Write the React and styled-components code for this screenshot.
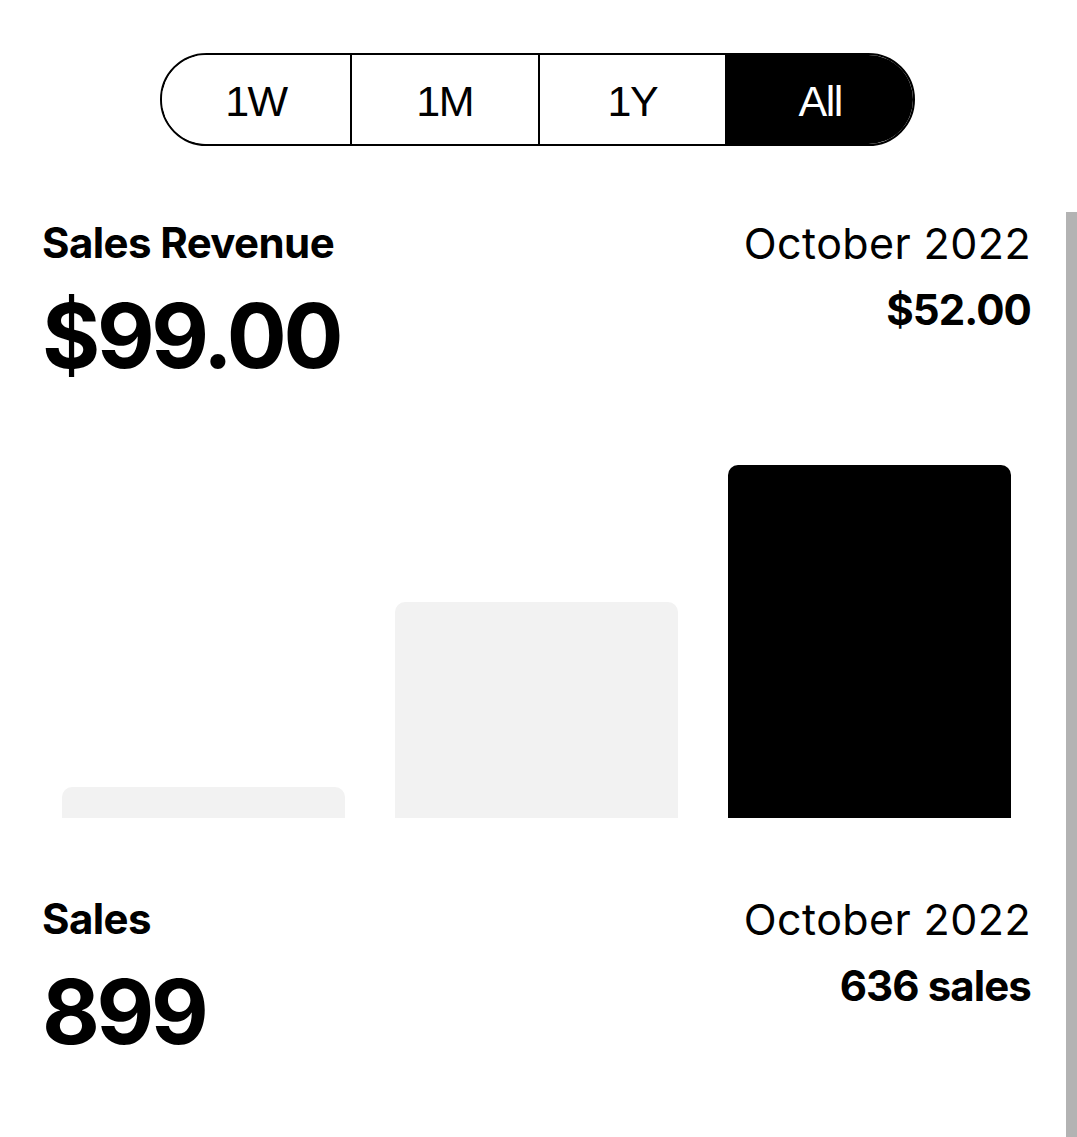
import React, { useState } from "react";
import styled, { createGlobalStyle } from "styled-components";

const GlobalStyle = createGlobalStyle`
  html, body {
    margin: 0;
    padding: 0;
    background: #ffffff;
  }
  body {
    font-family: Inter, "Noto Sans", sans-serif;
    color: #000000;
  }
`;

const Page = styled.div`
  position: relative;
  min-height: 1137px;
  padding: 53px 46px 0 42px;
  box-sizing: border-box;
  overflow: hidden;
`;

const RangeRow = styled.div`
  display: flex;
  justify-content: center;
  padding-left: 2px;
`;

const Segmented = styled.div`
  display: grid;
  grid-template-columns: repeat(4, 1fr);
  width: 755px;
  height: 93px;
  border: 2px solid #000;
  border-radius: 47px;
  box-sizing: border-box;
  overflow: hidden;
`;

const Segment = styled.button`
  display: flex;
  align-items: center;
  justify-content: center;
  margin: 0;
  padding: 3px 0 0 0;
  border: none;
  border-left: ${(p) => (p.$first ? "none" : "2px solid #000")};
  background: ${(p) => (p.$active ? "#000" : "#fff")};
  color: ${(p) => (p.$active ? "#fff" : "#000")};
  font-family: "Liberation Sans", Arial, sans-serif;
  font-size: 43px;
  letter-spacing: -1.5px;
  cursor: pointer;
`;

const StatBlock = styled.section`
  display: flex;
  justify-content: space-between;
  align-items: flex-start;
  margin-top: ${(p) => p.$top}px;
`;

const Column = styled.div`
  display: flex;
  flex-direction: column;
  align-items: ${(p) => (p.$right ? "flex-end" : "flex-start")};
  gap: ${(p) => p.$gap}px;
`;

const Label = styled.div`
  font-size: 42px;
  line-height: 1;
  font-weight: 650;
  letter-spacing: -0.6px;
`;

const Period = styled.div`
  font-size: 43px;
  line-height: 1;
  font-weight: 400;
  letter-spacing: 0.4px;
`;

const BigValue = styled.div`
  font-size: 89px;
  line-height: 1;
  font-weight: 650;
  letter-spacing: -3.4px;
`;

const SmallValue = styled.div`
  font-size: 42px;
  line-height: 1;
  font-weight: 650;
  letter-spacing: -0.9px;
`;

const Chart = styled.div`
  display: grid;
  grid-template-columns: repeat(3, 1fr);
  column-gap: 50px;
  align-items: end;
  height: 353px;
  margin-top: 85px;
  padding: 0 20px;
`;

const Bar = styled.div`
  background: ${(p) => (p.$active ? "#000" : "#f2f2f2")};
  border-radius: 10px 10px 0 0;
`;

const ScrollThumb = styled.div`
  position: absolute;
  top: 212px;
  right: 0;
  bottom: 0;
  width: 11px;
  background: #b3b3b3;
`;

const ranges = ["1W", "1M", "1Y", "All"];
const bars = [
  { month: "August 2022", value: 4.6 },
  { month: "September 2022", value: 31.8 },
  { month: "October 2022", value: 52 },
];

export default function App() {
  const [range, setRange] = useState("All");
  const max = Math.max(...bars.map((b) => b.value));

  return (
    <>
      <GlobalStyle />
      <Page>
        <RangeRow>
          <Segmented>
            {ranges.map((r, i) => (
              <Segment
                key={r}
                $first={i === 0}
                $active={r === range}
                onClick={() => setRange(r)}
              >
                {r}
              </Segment>
            ))}
          </Segmented>
        </RangeRow>

        <StatBlock $top={76}>
          <Column $gap={27}>
            <Label>Sales Revenue</Label>
            <BigValue>$99.00</BigValue>
          </Column>
          <Column $right $gap={24}>
            <Period>October 2022</Period>
            <SmallValue>$52.00</SmallValue>
          </Column>
        </StatBlock>

        <Chart>
          {bars.map((b, i) => (
            <Bar
              key={b.month}
              $active={i === bars.length - 1}
              style={{ height: `${(b.value / max) * 100}%` }}
            />
          ))}
        </Chart>

        <StatBlock $top={80}>
          <Column $gap={27}>
            <Label>Sales</Label>
            <BigValue>899</BigValue>
          </Column>
          <Column $right $gap={24}>
            <Period>October 2022</Period>
            <SmallValue>636 sales</SmallValue>
          </Column>
        </StatBlock>

        <ScrollThumb />
      </Page>
    </>
  );
}
